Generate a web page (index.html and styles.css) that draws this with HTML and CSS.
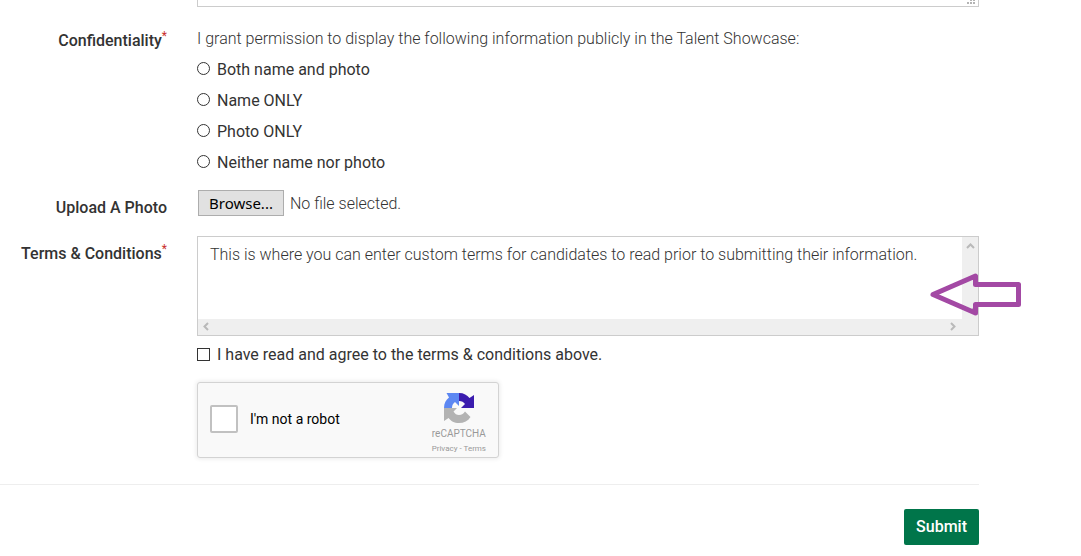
FILE: index.html
```html
<!DOCTYPE html>
<html lang="en">
<head>
<meta charset="utf-8">
<title>Talent Showcase</title>
<link rel="stylesheet" href="styles.css">
</head>
<body>
<form class="form">
  <div class="row row-comments">
    <div class="field comments">
      <textarea class="comments-box" aria-label="Comments"></textarea>
      <svg class="grip" width="8" height="5" viewBox="0 0 8 5" fill="#b4b4b4" aria-hidden="true"><path d="M3 0h2v1H3zM6 0h2v1H6zM0 2h2v2H0zM3 2h2v2H3zM6 2h2v2H6z"/></svg>
    </div>
  </div>

  <div class="row row-privacy" role="radiogroup" aria-labelledby="privacy-label">
    <div class="label" id="privacy-label">Confidentiality<span class="required">*</span></div>
    <div class="field choices">
      <p class="intro">I grant permission to display the following information publicly in the Talent Showcase:</p>
      <label class="choice"><input class="radio" type="radio" name="privacy">Both name and photo</label>
      <label class="choice"><input class="radio" type="radio" name="privacy">Name ONLY</label>
      <label class="choice"><input class="radio" type="radio" name="privacy">Photo ONLY</label>
      <label class="choice"><input class="radio" type="radio" name="privacy">Neither name nor photo</label>
    </div>
  </div>

  <div class="row row-upload">
    <label class="label" for="photo">Upload A Photo</label>
    <div class="field upload">
      <input class="file-input" type="file" id="photo">
      <button class="browse" type="button">Browse...</button>
      <span class="file-name">No file selected.</span>
    </div>
  </div>

  <div class="row row-terms">
    <label class="label" for="terms">Terms &amp; Conditions<span class="required">*</span></label>
    <div class="field">
      <div class="terms">
        <textarea class="terms-text" id="terms" readonly wrap="off">This is where you can enter custom terms for candidates to read prior to submitting their information.</textarea>
        <div class="bar bar-v">
          <svg width="9" height="6" viewBox="0 0 9 6" aria-hidden="true"><path d="M1 5l3.500-3.500L8 5"/></svg>
          <svg width="9" height="6" viewBox="0 0 9 6" aria-hidden="true"><path d="M1 1l3.500 3.500L8 1"/></svg>
        </div>
        <div class="bar bar-h">
          <svg width="6" height="9" viewBox="0 0 6 9" aria-hidden="true"><path d="M5 1L1.500 4.500L5 8"/></svg>
          <svg width="6" height="9" viewBox="0 0 6 9" aria-hidden="true"><path d="M1 1l3.500 3.500L1 8"/></svg>
        </div>
        <svg class="pointer" width="92" height="46" viewBox="0 0 92 46" aria-hidden="true"><path stroke-linejoin="round" d="M4 22.500L46.500 4V12.500H89.500V32.500H46.500V41Z"/></svg>
      </div>
      <label class="choice agree"><input class="checkbox" type="checkbox">I have read and agree to the terms &amp; conditions above.</label>
      <div class="captcha">
        <label class="captcha-label"><input class="captcha-check" type="checkbox">I'm not a robot</label>
        <div class="captcha-brand">
          <svg width="30" height="30" viewBox="0 0 30 30" aria-hidden="true">
            <path fill="#3b1cae" d="M15 0C20 0 23 2 25.500 5L30 2V15H17L21 11C19.500 9 18 8 15 8Z"/>
            <path fill="#5c87f2" d="M15 0V13L11 9C9 10.500 8 12 8 15H0C0 10 2 7 5 4.500L2.500 0Z"/>
            <path fill="#b3b3b3" d="M0 15H13L9.500 18.500C11 21 12.500 22 15 22C18 22 19.500 20.500 21 18.500L26.500 24C24 28 20 30 15 30C10 30 7 28 4.500 25L0 28Z"/>
          </svg>
          <span class="captcha-name">reCAPTCHA</span>
          <span class="captcha-links"><a href="#">Privacy</a> - <a href="#">Terms</a></span>
        </div>
      </div>
    </div>
  </div>

  <div class="actions"><button class="submit" type="submit">Submit</button></div>
</form>
</body>
</html>
```
FILE: styles.css
```css
* { box-sizing: border-box; }

body {
  margin: 0;
  background: #fff;
  color: #333;
  font: 400 16px/31px Roboto, sans-serif;
}

.form { margin-right: 102px; }

.row {
  display: grid;
  grid-template-columns: 167px minmax(0, 1fr);
  column-gap: 30px;
}

.field { grid-column: 2; }

.label {
  font-weight: 500;
  text-align: right;
  line-height: 20px;
}

.required {
  color: #c9302c;
  font-size: 12px;
  font-weight: 400;
  line-height: 0;
  vertical-align: 6px;
}

.comments { position: relative; }

.comments-box {
  display: block;
  width: 100%;
  height: 7px;
  padding: 0;
  border: 1px solid #ccc;
  border-top: 0;
  resize: none;
}

.grip { position: absolute; right: 4px; bottom: 2px; }

.row-privacy { margin-top: 16px; }
.row-privacy .label { padding-top: 8px; }

.choices { display: flex; flex-direction: column; }

.intro {
  margin: 0;
  font-weight: 300;
}

.choice {
  display: flex;
  align-items: center;
  gap: 7px;
}

.radio, .checkbox {
  appearance: none;
  flex: none;
  width: 13px;
  height: 13px;
  margin: 0 0 2px;
  border: 1px solid #333;
  background: #fff;
}

.radio { border-radius: 50%; }

.row-upload { margin-top: 12px; }
.row-upload .label { padding-top: 8px; }

.upload {
  display: flex;
  align-items: center;
  gap: 6px;
  height: 26px;
  padding-left: 1px;
  position: relative;
}

.file-input {
  position: absolute;
  width: 1px;
  height: 1px;
  opacity: 0;
}

.browse {
  height: 26px;
  padding: 0 10px;
  border: 1px solid #adadad;
  background: #e1e1e1;
  color: #000;
  font: 400 15px/24px "Noto Sans", sans-serif;
}

.file-name { font-weight: 300; }

.row-terms { margin-top: 18px; }
.row-terms .label { padding-top: 8px; }

.terms {
  position: relative;
  display: grid;
  grid-template-columns: minmax(0, 1fr) 16px;
  grid-template-rows: 82px 16px;
  border: 1px solid #ccc;
}

.terms-text {
  display: block;
  padding: 6px 12px;
  border: 0;
  overflow: hidden;
  resize: none;
  background: #fff;
  color: #333;
  font: 300 16px/24px Roboto, sans-serif;
}

.bar {
  display: flex;
  align-items: center;
  justify-content: space-between;
  background: #efefef;
}

.bar path { fill: none; stroke: #b9b9b9; stroke-width: 2; }
.bar-v { flex-direction: column; padding: 6px 0; }
.bar-h { grid-column: 1 / 3; padding: 0 22px 2px 5px; }

.pointer { position: absolute; top: 35px; right: -43px; }
.pointer path { fill: none; stroke: #a349a4; stroke-width: 5; }

.agree { margin-top: 3px; line-height: 32px; }

.captcha {
  display: flex;
  align-items: center;
  justify-content: space-between;
  width: 302px;
  height: 76px;
  margin-top: 11px;
  padding: 0 12px;
  border: 1px solid #d3d3d3;
  border-radius: 3px;
  background: #f9f9f9;
  box-shadow: 0 0 4px 1px rgba(0, 0, 0, .08);
}

.captcha-label {
  display: flex;
  align-items: center;
  gap: 12px;
  padding-bottom: 2px;
  color: #000;
  font-size: 14px;
}

.captcha-check {
  appearance: none;
  width: 28px;
  height: 28px;
  margin: 0;
  border: 2px solid #c1c1c1;
  border-radius: 2px;
  background: #fff;
}

.captcha-brand {
  display: flex;
  flex-direction: column;
  align-items: center;
  padding-top: 9px;
  color: #999;
}

.captcha-name { margin-top: 3px; font-size: 10px; line-height: 16px; }
.captcha-links { font-size: 8px; line-height: 14px; }
.captcha-links a { color: inherit; text-decoration: none; }

.actions {
  display: flex;
  justify-content: flex-end;
  margin-top: 26px;
  padding: 24px 0 11px;
  border-top: 1px solid #eee;
}

.submit {
  height: 36px;
  padding: 0 12px;
  border: 0;
  border-radius: 2px;
  background: #00754a;
  color: #fff;
  font: 500 16px/36px Roboto, sans-serif;
}
```
